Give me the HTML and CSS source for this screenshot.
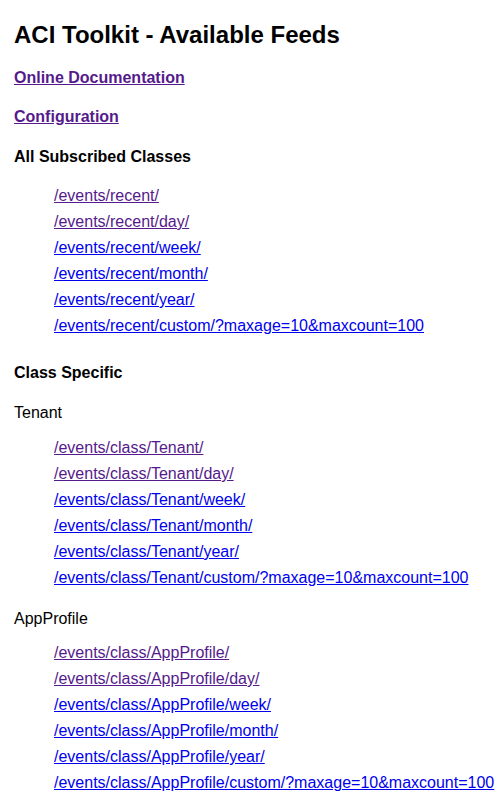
FILE: index.html
```html
<!DOCTYPE html>
<html>
<head>
<meta charset="utf-8">
<title>ACI Toolkit - Available Feeds</title>
<link rel="stylesheet" href="styles.css">
</head>
<body>
<h1 class="title">ACI Toolkit - Available Feeds</h1>
<p class="toplink"><a class="visited" href="#doc">Online Documentation</a></p>
<p class="toplink"><a class="visited" href="#config">Configuration</a></p>
<h3 class="section">All Subscribed Classes</h3>
<ul class="feeds feeds-first">
  <li><a class="visited" href="#r">/events/recent/</a></li>
  <li><a class="visited" href="#rd">/events/recent/day/</a></li>
  <li><a href="#rw">/events/recent/week/</a></li>
  <li><a href="#rm">/events/recent/month/</a></li>
  <li><a href="#ry">/events/recent/year/</a></li>
  <li><a href="#rc">/events/recent/custom/?maxage=10&amp;maxcount=100</a></li>
</ul>
<h3 class="section section-class">Class Specific</h3>
<p class="classname">Tenant</p>
<ul class="feeds">
  <li><a class="visited" href="#t">/events/class/Tenant/</a></li>
  <li><a class="visited" href="#td">/events/class/Tenant/day/</a></li>
  <li><a href="#tw">/events/class/Tenant/week/</a></li>
  <li><a href="#tm">/events/class/Tenant/month/</a></li>
  <li><a href="#ty">/events/class/Tenant/year/</a></li>
  <li><a href="#tc">/events/class/Tenant/custom/?maxage=10&amp;maxcount=100</a></li>
</ul>
<p class="classname classname-next">AppProfile</p>
<ul class="feeds feeds-last">
  <li><a class="visited" href="#a">/events/class/AppProfile/</a></li>
  <li><a class="visited" href="#ad">/events/class/AppProfile/day/</a></li>
  <li><a href="#aw">/events/class/AppProfile/week/</a></li>
  <li><a href="#am">/events/class/AppProfile/month/</a></li>
  <li><a href="#ay">/events/class/AppProfile/year/</a></li>
  <li><a href="#ac">/events/class/AppProfile/custom/?maxage=10&amp;maxcount=100</a></li>
</ul>
</body>
</html>
```
FILE: styles.css
```css
html, body {
  background: #ffffff;
}
body {
  margin: 0;
  padding: 0 14px;
  font-family: "Liberation Sans", Arial, Helvetica, sans-serif;
  font-size: 16px;
  color: #000000;
}
a {
  color: #0000ee;
  text-decoration: underline;
}
a.visited {
  color: #551a8b;
}
.title {
  font-size: 24px;
  line-height: 28px;
  font-weight: bold;
  margin: 21px 0 0;
}
.toplink {
  margin: 19px 0 0;
  line-height: 20px;
  font-weight: bold;
}
.section {
  margin: 20px 0 0;
  font-size: 16px;
  line-height: 20px;
  font-weight: bold;
}
.section-class {
  margin-top: 24px;
}
.classname {
  margin: 20px 0 0;
  line-height: 20px;
}
.classname-next {
  margin-top: 18px;
}
.feeds {
  list-style: none;
  margin: 12px 0 0;
  padding: 0 0 0 40px;
}
.feeds-first {
  margin-top: 16px;
}
.feeds-last {
  margin-top: 11px;
}
.feeds li {
  line-height: 26px;
  height: 26px;
  white-space: nowrap;
}
```
